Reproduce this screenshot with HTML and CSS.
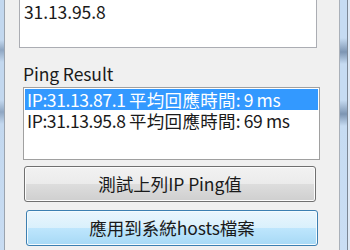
FILE: index.html
```html
<!DOCTYPE html>
<html>
<head>
<meta charset="utf-8">
<link rel="stylesheet" href="styles.css">
</head>
<body>
<div class="window">
  <div class="frame-left"></div>
  <div class="content">
    <div class="textbox"><span class="tb-text">31.13.95.8</span></div>
    <div class="label">Ping Result</div>
    <div class="listbox">
      <div class="row selected">IP:31.13.87.1 <span class="cjk">平均回應時間</span>: 9 ms</div>
      <div class="row">IP:31.13.95.8 <span class="cjk">平均回應時間</span>: 69 ms</div>
    </div>
    <div class="btn btn-normal"><span><span class="cjk">測試上列</span>IP Ping<span class="cjk">值</span></span></div>
    <div class="btn btn-hot"><span><span class="cjk">應用到系統</span>hosts<span class="cjk">檔案</span></span></div>
  </div>
  <div class="frame-right">
    <div class="fr-line"></div>
    <div class="fr-glass"></div>
    <div class="fr-dark"></div>
    <div class="fr-edge"></div>
  </div>
</div>
</body>
</html>
```

FILE: styles.css
```css
html, body {
  margin: 0;
  padding: 0;
}
body {
  width: 350px;
  height: 250px;
  overflow: hidden;
  font-family: "Noto Sans CJK TC", sans-serif;
  font-size: 17.5px;
  letter-spacing: -0.1px;
  color: #1a1a1a;
}
.cjk {
  font-family: "Noto Sans CJK TC", sans-serif;
  font-size: 17.5px;
  letter-spacing: 0;
}
.window {
  display: flex;
  width: 350px;
  height: 250px;
  background: #f0f0f0;
}
.frame-left {
  width: 4px;
  flex: none;
  background: linear-gradient(to bottom, #c3d8ef 0px, #c3d8ef 40px, #8fa6c2 50px, #c3d8ef 62px, #c3d8ef 100px, #8fa6c2 112px, #c3d8ef 124px, #c8dcf2 250px);
  border-right: 1px solid #9aa3ae;
}
.content {
  flex: 1;
  display: flex;
  flex-direction: column;
  padding-left: 14px;
}
.frame-right {
  width: 11px;
  flex: none;
  display: flex;
}
.fr-line {
  width: 1px;
  background: #a9b0b9;
}
.fr-glass {
  width: 7px;
  background: linear-gradient(to bottom, #c6dbf2 0px, #c6dbf2 38px, #7d95b3 52px, #c6dbf2 64px, #c6dbf2 100px, #7d95b3 114px, #c6dbf2 126px, #cadef4 250px);
}
.fr-dark {
  width: 1px;
  background: #7c8795;
}
.fr-edge {
  width: 2px;
  background: #dfe9f5;
}
.textbox {
  width: 296px;
  height: 47px;
  background: #fff;
  border: 1px solid #abadb3;
  border-top: none;
}
.tb-text {
  display: block;
  padding-left: 4px;
  line-height: 24px;
}
.label {
  margin-top: 13px;
  margin-left: 4px;
  line-height: 26px;
  height: 26px;
}
.listbox {
  margin-left: 4px;
  width: 293px;
  height: 69px;
  background: #fff;
  border: 1px solid #a0a0a0;
  padding: 1px;
  box-sizing: content-box;
}
.row {
  height: 21px;
  line-height: 22px;
  padding-left: 2px;
  white-space: nowrap;
  letter-spacing: -0.4px;
}
.row .cjk {
  letter-spacing: 0.3px;
}
.row.selected {
  background: #3399ff;
  color: #fff;
}
.btn {
  box-sizing: border-box;
  width: 292px;
  height: 36px;
  border-radius: 3px;
  display: flex;
  align-items: center;
  justify-content: center;
  color: #1a1a1a;
  line-height: 24px;
  white-space: nowrap;
}
.btn-normal {
  margin-top: 6px;
  margin-left: 5px;
  border: 1px solid #707070;
  background: linear-gradient(to bottom, #f2f2f2 0%, #ebebeb 50%, #dddddd 50%, #cfcfcf 100%);
  box-shadow: inset 0 0 0 1px #fcfcfc;
}
.btn-hot {
  margin-top: 8px;
  margin-left: 7px;
  border: 1px solid #3c7fb1;
  background: linear-gradient(to bottom, #eaf6fd 0%, #d9f0fc 50%, #bee6fd 50%, #a7d9f5 100%);
  box-shadow: inset 0 0 0 1px #f4fbfe;
}
```
